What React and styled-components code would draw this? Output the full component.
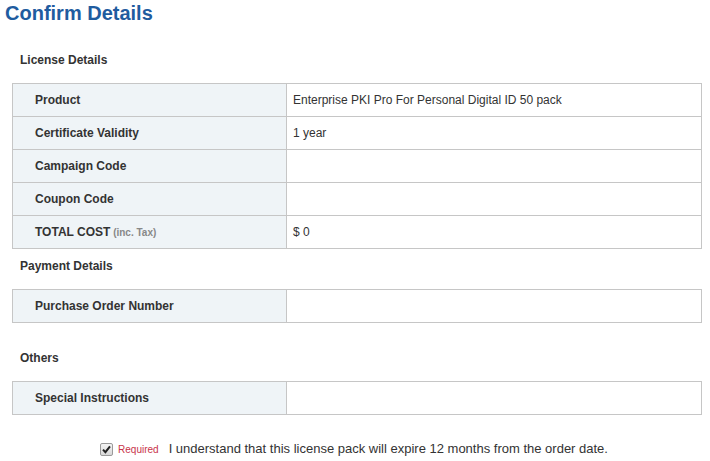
import React from 'react';
import styled, { createGlobalStyle } from 'styled-components';

const GlobalStyle = createGlobalStyle`
  body {
    margin: 0;
    background: #fff;
    font-family: "Liberation Sans", Arial, sans-serif;
    color: #333;
  }
`;

export default function App() {
  const licenseRows = [
    { id: 'product', label: 'Product', value: 'Enterprise PKI Pro For Personal Digital ID 50 pack' },
    { id: 'validity', label: 'Certificate Validity', value: '1 year' },
    { id: 'campaign', label: 'Campaign Code', value: '' },
    { id: 'coupon', label: 'Coupon Code', value: '' },
    { id: 'total', label: 'TOTAL COST', note: '(inc. Tax)', value: '$ 0' },
  ];

  const renderRows = (rows) =>
    rows.map(({ id, label, note, value }) => (
      <tr key={id}>
        <LabelCell>
          {label}
          {note && <Note> {note}</Note>}
        </LabelCell>
        <ValueCell>{value}</ValueCell>
      </tr>
    ));

  return (
    <Page>
      <GlobalStyle />
      <Title>Confirm Details</Title>

      <SectionHeading $top={26}>License Details</SectionHeading>
      <DetailsTable>
        <tbody>{renderRows(licenseRows)}</tbody>
      </DetailsTable>

      <SectionHeading $top={9}>Payment Details</SectionHeading>
      <DetailsTable>
        <tbody>{renderRows([{ id: 'po', label: 'Purchase Order Number', value: '' }])}</tbody>
      </DetailsTable>

      <SectionHeading $top={27}>Others</SectionHeading>
      <DetailsTable>
        <tbody>{renderRows([{ id: 'notes', label: 'Special Instructions', value: '' }])}</tbody>
      </DetailsTable>

      <Agreement>
        <CheckBox>
          <svg width="9" height="9" viewBox="0 0 9 9">
            <path d="M1 4.6 L3.4 7.2 L8 1.4" fill="none" stroke="#222" strokeWidth="2" />
          </svg>
        </CheckBox>
        <Required>Required</Required>
        <span>I understand that this license pack will expire 12 months from the order date.</span>
      </Agreement>
    </Page>
  );
}

const Page = styled.div`
  width: 710px;
  padding-bottom: 8px;
`;

const Title = styled.h1`
  margin: 0;
  padding-left: 5px;
  font-size: 20px;
  line-height: 26px;
  font-weight: bold;
  color: #1f5c9f;
`;

const SectionHeading = styled.h3`
  margin: ${({ $top }) => $top}px 0 15px 20px;
  font-size: 12px;
  line-height: 16px;
  font-weight: bold;
  color: #333;
`;

const DetailsTable = styled.table`
  margin-left: 12px;
  width: 690px;
  border-collapse: collapse;
  font-size: 12px;

  td {
    border: 1px solid #c6c6c6;
    height: 33px;
    box-sizing: border-box;
    vertical-align: middle;
  }
`;

const LabelCell = styled.td`
  width: 274px;
  padding: 0 0 1px 22px;
  background: #eff4f7;
  font-weight: bold;
  color: #333;
`;

const ValueCell = styled.td`
  padding: 0 0 0 6px;
  color: #333;
`;

const Note = styled.span`
  font-size: 10px;
  color: #888;
`;

const Agreement = styled.div`
  display: flex;
  align-items: center;
  justify-content: center;
  margin-top: 25px;
  padding-right: 2px;
  font-size: 13px;
  color: #333;
  line-height: 16px;
`;

const CheckBox = styled.span`
  display: inline-flex;
  align-items: center;
  justify-content: center;
  width: 11px;
  height: 11px;
  border: 1px solid #9a9a9a;
  border-radius: 2px;
  background: linear-gradient(#f4f4f4, #d8d8d8);
  margin-right: 5px;
`;

const Required = styled.span`
  font-size: 10px;
  color: #c8344a;
  margin-right: 10px;
  margin-top: 2px;
`;
